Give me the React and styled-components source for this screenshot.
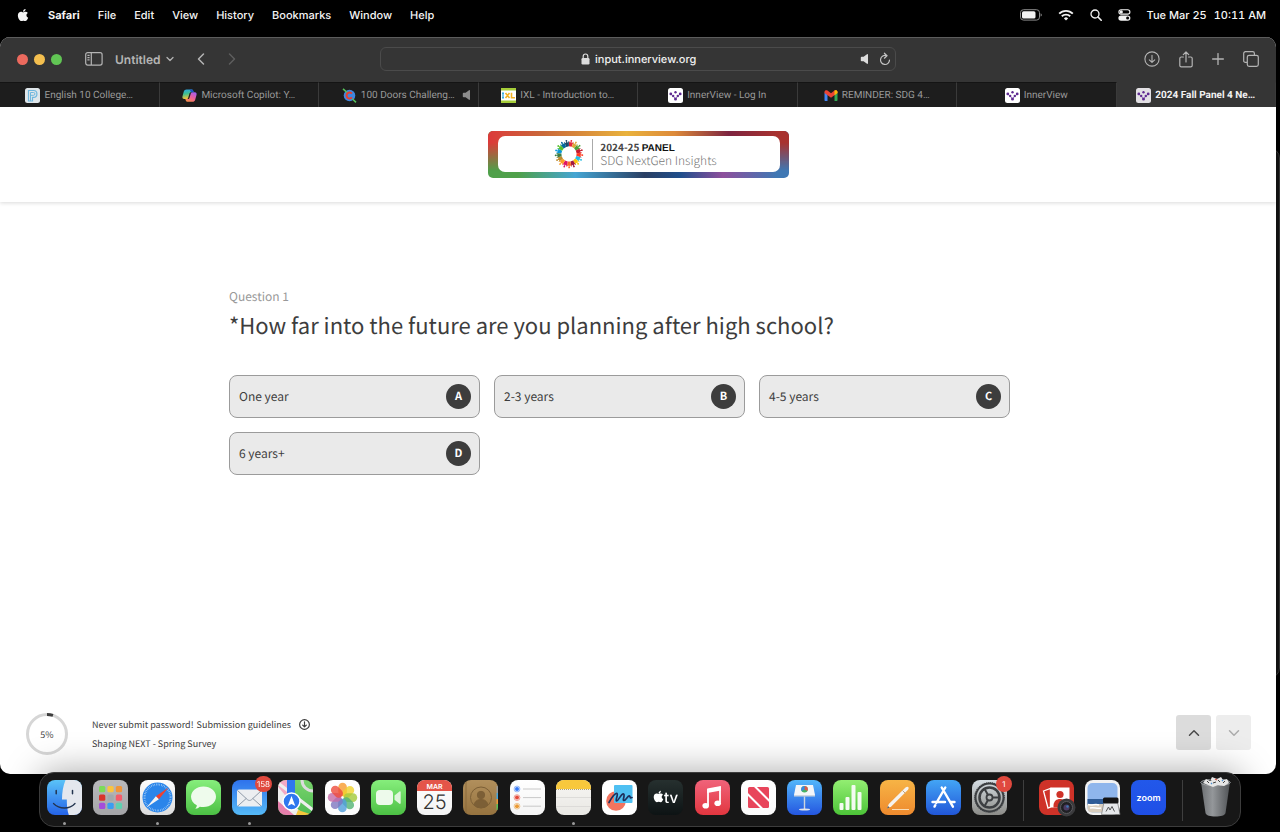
import { useState } from 'react';
import styled, { createGlobalStyle } from 'styled-components';
import { FaApple } from 'react-icons/fa';
import { ChevronDown, ChevronLeft, ChevronRight, ChevronUp } from 'lucide-react';

const sdgColors = [
  '#e5243b', '#dda63a', '#4c9f38', '#c5192d', '#ff3a21', '#26bde2',
  '#fcc30b', '#a21942', '#fd6925', '#dd1367', '#fd9d24', '#bf8b2e',
  '#3f7e44', '#0a97d9', '#56c02b', '#00689d', '#19486a'
];

const menus = ['File', 'Edit', 'View', 'History', 'Bookmarks', 'Window', 'Help'];

/* ---------- small icons ---------- */

const Battery = () => (
  <svg width="22" height="12" viewBox="0 0 22 12">
    <rect x="0.5" y="0.7" width="19" height="10.4" rx="3" fill="none" stroke="#8a8a8a" />
    <rect x="2" y="2.2" width="13.5" height="7.4" rx="1.6" fill="#f2f2f2" />
    <path d="M20.6 4.2v3.4c.8-.3 1.2-.9 1.2-1.7s-.4-1.400-1.200-1.700z" fill="#8a8a8a" />
  </svg>
);

const Wifi = () => (
  <svg width="16" height="12" viewBox="0 0 16 12" fill="none" stroke="#f2f2f2">
    <path d="M1.200 4.700a9.600 9.600 0 0 1 13.600 0" strokeWidth="1.900" />
    <path d="M3.800 7.300a6 6 0 0 1 8.400 0" strokeWidth="1.900" />
    <path d="M8 11.600 5.900 9.400a3 3 0 0 1 4.200 0z" fill="#f2f2f2" stroke="none" />
  </svg>
);

const Search = () => (
  <svg width="12" height="12" viewBox="0 0 12 12" fill="none" stroke="#f2f2f2" strokeLinecap="round">
    <circle cx="5" cy="5" r="4" strokeWidth="1.300" />
    <path d="m8 8 3.200 3.200" strokeWidth="1.600" />
  </svg>
);

const ControlCenter = () => (
  <svg width="13" height="12" viewBox="0 0 13 12">
    <rect x="0.900" y="0.700" width="11" height="4.400" rx="2.200" fill="none" stroke="#f2f2f2" strokeWidth="1.100" />
    <circle cx="3.300" cy="2.900" r="1.600" fill="#f2f2f2" />
    <rect x="0.400" y="6.400" width="12" height="5.400" rx="2.700" fill="#f2f2f2" />
    <circle cx="9.600" cy="9.100" r="1.500" fill="#000" />
  </svg>
);

const SidebarIcon = () => (
  <svg width="18" height="14" viewBox="0 0 18 14" fill="none" stroke="#b4b4b4" strokeWidth="1.200">
    <rect x="0.700" y="0.700" width="16.400" height="12.400" rx="2" />
    <path d="M6.300 1v12M2.400 3.400h2.200M2.400 5.600h2.200M2.400 7.800h2.200" />
  </svg>
);

const LockIcon = () => (
  <svg width="9" height="12" viewBox="0 0 9 12">
    <rect x="0.500" y="5" width="8" height="6.500" rx="1.200" fill="#dcdcdc" />
    <path d="M2.200 5.500V3.300a2.300 2.300 0 0 1 4.600 0v2.200" fill="none" stroke="#dcdcdc" strokeWidth="1.200" />
  </svg>
);

const Speaker = ({ color = '#dcdcdc' }) => (
  <svg width="10" height="12" viewBox="0 0 10 12">
    <path d="M1.600 3.800h2L7 1.200c.4-.3 1-.1 1 .5v8.600c0 .6-.6.800-1 .5L3.600 8.200h-2c-.5 0-.8-.3-.8-.8V4.600c0-.5.300-.8.800-.8z" fill={color} />
  </svg>
);

const Reload = () => (
  <svg width="12" height="14" viewBox="0 0 12 14" fill="none" stroke="#c4c4c4" strokeWidth="1.200" strokeLinecap="round">
    <path d="M7.400 3.700A4.500 4.500 0 1 0 10.500 8" />
    <path d="M5.400 1.200 8 3.700 5.400 6.200" />
  </svg>
);

const DownloadCircle = ({ size = 16, color = '#b4b4b4', width = 1.1 }) => (
  <svg width={size} height={size} viewBox="0 0 16 16" fill="none" stroke={color} strokeWidth={width} strokeLinecap="round" strokeLinejoin="round">
    <circle cx="8" cy="8" r="7.100" />
    <path d="M8 4.300v7M5.300 8.800 8 11.400l2.700-2.600" />
  </svg>
);

const ShareIcon = () => (
  <svg width="14" height="17" viewBox="0 0 14 17" fill="none" stroke="#b4b4b4" strokeWidth="1.200" strokeLinecap="round" strokeLinejoin="round">
    <path d="M4.400 6H2.300C1.300 6 .8 6.500.8 7.400v7c0 1 .5 1.400 1.500 1.400h9.400c1 0 1.500-.4 1.500-1.400v-7c0-.9-.5-1.400-1.500-1.400H9.600" />
    <path d="M7 11V1.200M4.300 3.700 7 1l2.700 2.700" />
  </svg>
);

const PlusIcon = () => (
  <svg width="12" height="12" viewBox="0 0 12 12" stroke="#b4b4b4" strokeWidth="1.300" strokeLinecap="round">
    <path d="M6 .6v10.800M.6 6h10.800" />
  </svg>
);

const TabsIcon = () => (
  <svg width="16" height="16" viewBox="0 0 16 16" fill="none" stroke="#b4b4b4" strokeWidth="1.200">
    <path d="M4.200 11.400H2.400A1.700 1.700 0 0 1 .7 9.700V2.400C.7 1.500 1.500.7 2.400.7h7.300c1 0 1.700.8 1.700 1.700v1.800" />
    <rect x="4.300" y="4.300" width="11" height="11" rx="1.800" />
  </svg>
);

const InnerViewMark = ({ bg = '#fff' }) => (
  <svg width="15" height="15" viewBox="0 0 15 15">
    <rect width="15" height="15" rx="2.500" fill={bg} />
    <path d="m2.800 6.200 2 1.500M12.200 6.200l-2 1.500M5.600 8.600l1.900 1.900 1.900-1.900" stroke="#9a7cc0" fill="none" />
    <g fill="#5f2a91">
      <circle cx="2.800" cy="5.900" r="1.400" />
      <circle cx="12.200" cy="5.900" r="1.400" />
      <circle cx="5.200" cy="8" r="1.200" />
      <circle cx="9.800" cy="8" r="1.200" />
      <circle cx="7.500" cy="4.300" r="1.200" />
      <circle cx="7.500" cy="11" r="1.500" />
    </g>
  </svg>
);

const PowerSchoolMark = () => (
  <svg width="15" height="15" viewBox="0 0 15 15" fill="none" stroke="#6fb7de">
    <rect width="15" height="15" rx="2.500" fill="#dfe6ea" stroke="none" />
    <path d="M3.500 13V2.500h5a3.300 3.300 0 0 1 0 6.800H7.500V13z" strokeWidth="1.200" />
    <path d="M5.500 13V4.500h3a1.400 1.400 0 0 1 0 2.800H5.500" />
  </svg>
);

const CopilotMark = () => (
  <svg width="15" height="15" viewBox="0 0 15 15">
    <defs>
      <linearGradient id="cpA" x1="0" y1="0" x2="0.200" y2="1">
        <stop offset="0" stopColor="#2aa6e8" />
        <stop offset="0.500" stopColor="#3fbf8f" />
        <stop offset="1" stopColor="#f3c13a" />
      </linearGradient>
      <linearGradient id="cpB" x1="0.800" y1="0" x2="0.200" y2="1">
        <stop offset="0" stopColor="#a45cf0" />
        <stop offset="0.500" stopColor="#ee5f98" />
        <stop offset="1" stopColor="#f88f45" />
      </linearGradient>
    </defs>
    <path d="M4.600 1.500h5c.9 0 1.400.6 1.700 1.500l.4 1.300H9.200c-1 0-1.500.5-1.800 1.500L6.300 9.500c-.3 1-.9 1.500-1.900 1.500H2.200C.7 11 .1 9.800.5 8.300l1.300-4.700C2.200 2.200 3.100 1.500 4.600 1.500z" fill="url(#cpA)" />
    <path d="M10.400 13.800h-5c-.9 0-1.400-.6-1.700-1.500L3.300 11h2.500c1 0 1.500-.5 1.800-1.500l1.100-3.700c.3-1 .9-1.500 1.900-1.500h2.200c1.500 0 2.100 1.200 1.700 2.700l-1.300 4.700c-.4 1.400-1.300 2.100-2.800 2.100z" fill="url(#cpB)" />
    <path d="M7.500 1.500h2.100c.9 0 1.400.6 1.700 1.500l.4 1.300H9.200z" fill="#1f4fc4" />
  </svg>
);

const CoolMathMark = () => (
  <svg width="15" height="15" viewBox="0 0 15 15" fill="none">
    <circle cx="7.500" cy="7.500" r="5.800" fill="#3f86e0" />
    <path d="m1 .8 4 3.500M10.500 11l3.500 3.300" stroke="#56c05a" strokeWidth="1.600" />
    <path d="M9.900 5.600a3 3 0 1 0 0 3.800" stroke="#e8402c" strokeWidth="2" />
  </svg>
);

const IxlMark = () => (
  <svg width="15" height="15" viewBox="0 0 15 15" fill="none">
    <rect width="15" height="15" fill="#fff" />
    <path d="M0 1.300h15M0 13.700h15" stroke="#a6ce39" strokeWidth="2.600" />
    <path d="M1 5.200h2M1 9.800h2M2 5.200v4.600" stroke="#29a3dd" strokeWidth="1.200" />
    <path d="m4.500 5 4 5M8.500 5l-4 5M10.500 4.800v5h3.500" stroke="#f4b223" strokeWidth="1.600" />
  </svg>
);

const GmailMark = () => (
  <svg width="14" height="15" viewBox="0 0 14 15">
    <path d="M.5 4.500h3V13h-2c-.6 0-1-.4-1-1z" fill="#4285f4" />
    <path d="M10.500 4.500h3V12c0 .6-.4 1-1 1h-2z" fill="#34a853" />
    <path d="M.5 4c0-1.700 1.800-2.300 3-1.400L7 5.300l3.500-2.700c1.200-.9 3-.3 3 1.400v1L7 9.800.5 5z" fill="#ea4335" />
    <path d="M10.500 2.600c1.200-.9 3-.3 3 1.400v1l-3 2.200z" fill="#fbbc04" />
  </svg>
);

const SdgWheel = () => (
  <svg width="30" height="30" viewBox="0 0 30 30">
    {sdgColors.map((color, i) => (
      <g key={color} transform={`rotate(${(i * 360) / 17 + 10} 15 15)`}>
        <path d="M12.600 2 14.100 3.800 15 1.600l.9 2.200L17.400 2l-1 5.500h-2.800z" fill={color} />
        <circle cx="15" cy="1.600" r="0.900" fill={color} />
      </g>
    ))}
  </svg>
);

/* ---------- dock icons, all on a 35 x 35 tile ---------- */

const Tile = ({ id, from, to, children }) => (
  <svg width="35" height="35" viewBox="0 0 35 35">
    <defs>
      <linearGradient id={`g-${id}`} x1="0" y1="0" x2="0" y2="1">
        <stop offset="0" stopColor={from} />
        <stop offset="1" stopColor={to} />
      </linearGradient>
      <clipPath id={`c-${id}`}>
        <rect width="35" height="35" rx="8" />
      </clipPath>
    </defs>
    <g clipPath={`url(#c-${id})`}>
      <rect width="35" height="35" fill={`url(#g-${id})`} />
      {children}
    </g>
  </svg>
);

const Finder = () => (
  <Tile id="finder" from="#5ac3f8" to="#2563e8">
    <path d="M18.500 0C16 6 15 13 15 19.500h4.800c0 6 .5 11 2 15.500H35V0z" fill="#e4e7ee" />
    <path d="M9.200 10.500v3.200M25.500 10.500v3.200" stroke="#23344f" strokeWidth="1.500" strokeLinecap="round" />
    <path d="M6.500 23.500c6 6 16 6 21.500 0" fill="none" stroke="#23344f" strokeWidth="1.300" strokeLinecap="round" />
  </Tile>
);

const Launchpad = () => (
  <Tile id="launchpad" from="#b9b9bb" to="#a5a5a8">
    {['#7bdc58', '#f9c440', '#f0953a', '#d9342c', '#a2a8ad', '#f45b6b', '#a44ddb', '#3b9df2', '#5fd0b0'].map((c, i) => (
      <rect key={c} x={6 + (i % 3) * 8.4} y={6 + Math.floor(i / 3) * 8.4} width="6.300" height="6.300" rx="1.500" fill={c} />
    ))}
  </Tile>
);

const Safari = () => (
  <Tile id="safari" from="#fdfdfd" to="#dcdcdc">
    <circle cx="17.500" cy="17.500" r="15" fill="#2a85ea" />
    <circle cx="17.500" cy="17.500" r="13" fill="none" stroke="#c8e2fb" strokeWidth="2" strokeDasharray="0.500 1.200" />
    <path d="m28.500 7.500-9.600 11.700-3-3z" fill="#f0402f" />
    <path d="m6.500 27.500 9.400-11.300 3 3z" fill="#f4f4f4" />
  </Tile>
);

const Messages = () => (
  <Tile id="messages" from="#86ee7c" to="#4cc044">
    <path d="M17.500 6.500c7 0 12.500 4.500 12.500 10.300s-5.500 10.300-12.500 10.300c-1.300 0-2.500-.1-3.700-.4-1.200 1.200-2.700 1.800-4.500 2 1-1 1.500-2.200 1.500-3.400C7.300 23.500 5 20.400 5 16.800 5 11 10.500 6.500 17.500 6.500z" fill="#eefbec" />
  </Tile>
);

const Mail = () => (
  <Tile id="mail" from="#2f72ec" to="#55baf7">
    <rect x="5" y="9.500" width="25" height="17" rx="2" fill="#eceef1" />
    <path d="m5.500 10.500 10 9.200c1.200 1 2.800 1 4 0l10-9.200M5.800 26l8.400-7.500M29.200 26l-8.400-7.500" fill="none" stroke="#8f9aa8" />
  </Tile>
);

const Maps = () => (
  <Tile id="maps" from="#79d46b" to="#4fbb55">
    <path d="M0 0h9v17L0 12z" fill="#f3a9c4" />
    <path d="M0 3 35 30M0 12l24 23M0 9v15l14 11h8z" stroke="#eee" strokeWidth="3" fill="#eee" />
    <path d="M0 21v14h16z" fill="#e77fac" />
    <path d="m20 30 15 5H18z" fill="#f4c63d" />
    <circle cx="35" cy="0" r="11" fill="none" stroke="#dcdcdc" strokeWidth="3" />
    <path d="M9 0h8v16H9z" fill="#2f78ee" />
    <circle cx="13.500" cy="21.500" r="8.500" fill="#2f78ee" stroke="#fff" strokeWidth="1.500" />
    <path d="m13.500 16 3.800 10-3.800-2-3.800 2z" fill="#fff" />
  </Tile>
);

const Photos = () => (
  <Tile id="photos" from="#fff" to="#fbfbfb">
    {['#f79b2e', '#f0d22c', '#a3c93a', '#52b374', '#4f9ddb', '#7d75bf', '#c46aa8', '#ee4b3c'].map((c, i) => (
      <rect key={c} x="13.300" y="2.800" width="8.600" height="13.500" rx="4.300" fill={c} opacity="0.800" transform={`rotate(${i * 45} 17.500 17.500)`} />
    ))}
  </Tile>
);

const FaceTime = () => (
  <Tile id="facetime" from="#86ee7c" to="#4cc044">
    <rect x="5" y="10" width="17" height="15" rx="4" fill="#edfaeb" />
    <path d="m23.500 15.500 5-4c.6-.4 1.200-.2 1.200.6v11c0 .8-.6 1-1.200.6l-5-4z" fill="#dff5dc" />
  </Tile>
);

const Calendar = () => (
  <Tile id="calendar" from="#fff" to="#f3f3f3">
    <rect width="35" height="11" fill="#e45549" />
    <text x="17.500" y="8.500" textAnchor="middle" fontFamily="Inter, sans-serif" fontSize="7" fontWeight="600" fill="#fff">MAR</text>
    <text x="17.500" y="29" textAnchor="middle" fontFamily="Inter, sans-serif" fontSize="20" fontWeight="300" fill="#333">25</text>
  </Tile>
);

const Contacts = () => (
  <Tile id="contacts" from="#b18f5c" to="#96733f">
    <path d="M33.500 6h3v7h-3z" fill="#9a9a9a" />
    <path d="M33.500 13h3v6h-3z" fill="#45a6e0" />
    <path d="M33.500 19h3v5h-3z" fill="#f09a3a" />
    <path d="M33.500 24h3v6h-3z" fill="#5cc15a" />
    <path d="M3 0v35" stroke="#8a6b3c" />
    <g stroke="#7c5f36" fill="none">
      <circle cx="18" cy="17.500" r="10.500" />
      <circle cx="18" cy="15" r="3.700" fill="#7c5f36" />
      <path d="M11 25c1-4 3.500-5.500 7-5.500s6 1.500 7 5.500a10.400 10.400 0 0 1-14 0z" fill="#7c5f36" />
    </g>
  </Tile>
);

const Reminders = () => (
  <Tile id="reminders" from="#fff" to="#f4f4f4">
    {['#3478f6', '#e5493a', '#eb9a34'].map((c, i) => (
      <g key={c}>
        <circle cx="7" cy={9 + i * 8.6} r="2.900" fill="none" stroke={c} strokeOpacity="0.500" />
        <circle cx="7" cy={9 + i * 8.6} r="2" fill={c} />
        <path d={`M13 ${9 + i * 8.6}h18`} stroke="#c8c8c8" />
      </g>
    ))}
  </Tile>
);

const Notes = () => (
  <Tile id="notes" from="#f7f6f3" to="#e9e8e4">
    <rect width="35" height="9" fill="#f8c83c" />
    <path d="M0 9.500h35" stroke="#b5a36a" strokeDasharray="1 1" />
    <path d="M0 17.500h35M0 26.500h35" stroke="#d8d7d4" strokeWidth="0.800" />
  </Tile>
);

const Freeform = () => (
  <Tile id="freeform" from="#fff" to="#fff">
    <circle cx="14" cy="21" r="9.800" fill="#f3745f" />
    <rect x="12" y="5" width="18.500" height="18" rx="1" fill="#4fc0f2" />
    <path d="M7 22.500C10 17 13.500 12.500 15 13.500s-2 7-.5 7.500 5-8 7-7-1.500 6.500.5 6.500 4-5.500 5.500-4.500-.5 2.500 2.500 1.500" fill="none" stroke="#1e2f5c" strokeWidth="1.700" strokeLinecap="round" />
  </Tile>
);

const AppleTv = () => (
  <Tile id="tv" from="#26302f" to="#0d1314">
    <FaApple x="4" y="10" size="13" color="#fff" />
    <text x="16" y="22.500" fontFamily="Inter, sans-serif" fontSize="15" fontWeight="500" fill="#fff">tv</text>
  </Tile>
);

const Music = () => (
  <Tile id="music" from="#f0637a" to="#e2363f">
    <path d="M13 10.200 25 7.500v14.800" fill="none" stroke="#fff" strokeWidth="1.800" />
    <path d="M13 9v16" stroke="#fff" strokeWidth="1.800" />
    <path d="m12.200 8.500 13.700-2.600v4.500L12.200 13z" fill="#fff" />
    <ellipse cx="10.700" cy="25.700" rx="3.300" ry="2.800" fill="#fff" />
    <ellipse cx="22.700" cy="23.200" rx="3.300" ry="2.800" fill="#fff" />
  </Tile>
);

const News = () => (
  <Tile id="news" from="#fff" to="#fafafa">
    <rect x="7" y="7" width="21" height="21" rx="1.500" fill="#e8455b" />
    <path d="m12.500 5 17.500 17.500M5 12.500 22.500 30" stroke="#fff" strokeWidth="2" />
  </Tile>
);

const Keynote = () => (
  <Tile id="keynote" from="#52b6fa" to="#2456e0">
    <path d="M9 5h17l2 10H7z" fill="#f4f6f9" />
    <path d="M7 15h21v1.500H7z" fill="#cdd5df" />
    <circle cx="17.500" cy="9.300" r="3.300" fill="#47b264" />
    <path d="M17.500 9.300V6a3.300 3.300 0 0 1 2.900 4.900z" fill="#e45549" />
    <path d="M17.500 9.300 14.600 11A3.300 3.300 0 0 1 17.500 6z" fill="#3b86e8" />
    <path d="M16.800 16.500h1.400V29h-1.400z" fill="#cdd5df" />
    <ellipse cx="17.500" cy="29.500" rx="5.500" ry="1.100" fill="#dfe5ec" />
  </Tile>
);

const Numbers = () => (
  <Tile id="numbers" from="#93ee72" to="#4cc438">
    <g fill="#f3fbf0">
      <rect x="6.500" y="23" width="4" height="7" rx="1" />
      <rect x="12.500" y="17" width="4" height="13" rx="1" />
      <rect x="18.500" y="5" width="4" height="25" rx="1" />
      <rect x="24.500" y="12" width="4" height="18" rx="1" />
    </g>
  </Tile>
);

const Pages = () => (
  <Tile id="pages" from="#f7b445" to="#ee8a2e">
    <path d="m7 28.500 1.800-4.500L25.500 7.500c2.500-1.800 4.200 0 2.500 2.300L11.500 26.200z" fill="#f6f3ee" />
    <path d="m7 28.500 1-2.600 1.500 1.500z" fill="#555" />
    <path d="m22.500 10.500 3 3" stroke="#b9a58a" />
    <path d="M12 29.500h17" stroke="#f9dcb4" />
  </Tile>
);

const AppStore = () => (
  <Tile id="appstore" from="#43a5f5" to="#2156d8">
    <g stroke="#fff" strokeWidth="2.400" strokeLinecap="round">
      <path d="m19.300 7.500-9 15.500M15.700 7.500l11.200 19.200M6.500 22h12.500M24.500 22h4M9.300 25.200l-.8 1.400" />
    </g>
  </Tile>
);

const Settings = () => (
  <Tile id="settings" from="#d5dde3" to="#8c8c88">
    <g fill="none" stroke="#3c3f42">
      <circle cx="17.500" cy="17.500" r="14" strokeWidth="2" />
      <circle cx="17.500" cy="17.500" r="14.800" strokeWidth="1.200" strokeDasharray="1 1" />
      <circle cx="17.500" cy="17.500" r="10" strokeWidth="2.600" />
      <circle cx="17.500" cy="17.500" r="3" strokeWidth="1.800" />
      <path d="M20.500 17.500h7M16 14.900l-3.500-6.100M16 20.100l-3.500 6.100" strokeWidth="2" />
    </g>
  </Tile>
);

const PhotoBooth = () => (
  <svg width="37" height="37" viewBox="0 0 37 37">
    <rect width="35" height="35" rx="8" fill="#cf3228" />
    <path d="m4.500 11 7-2.500V27L9 28z" fill="#cf3228" stroke="#fff" strokeWidth="1.300" />
    <path d="M11.500 7.500h19v20h-19z" fill="#fff" />
    <circle cx="21" cy="14.500" r="3.600" fill="#cf3228" />
    <path d="M14.500 25c.5-4 3-6 6.500-6s6 2 6.500 6v2.500h-13z" fill="#cf3228" />
    <circle cx="27.500" cy="27.500" r="9" fill="#3a3a3c" />
    <circle cx="27.500" cy="27.500" r="6" fill="#202024" stroke="#5b5b5f" />
    <circle cx="27.500" cy="27.500" r="3" fill="#4b3b63" />
    <circle cx="28.500" cy="26.500" r="1.200" fill="#3c79b5" />
  </svg>
);

const Preview = () => (
  <svg width="37" height="37" viewBox="0 0 37 37">
    <rect width="35" height="35" rx="8" fill="#f2f2f2" />
    <rect x="2.500" y="3" width="30" height="29.500" rx="5" fill="#8fb6ec" />
    <path d="M2.500 19h30v6h-30z" fill="#2f5c96" />
    <path d="M2.500 24h30v4c0 3-2 4.500-5 4.500h-20c-3 0-5-1.500-5-4.500z" fill="#d8cdbd" />
    <path d="M3 24.500c4 1.500 7-1 11 .5M5 28c4-1 7 1 11 0" stroke="#fff" strokeWidth="1.400" fill="none" />
    <path d="M19 22h13.500l2.500 12.500H16.500z" fill="#e6e8ea" stroke="#777" strokeWidth="0.700" />
    <rect x="18" y="17.500" width="15.500" height="6" rx="1.500" fill="#141414" />
    <path d="M21 31.500 23.500 27l1.500 3 2-3.500 2.500 5" fill="none" stroke="#555" />
  </svg>
);

const Zoom = () => (
  <Tile id="zoom" from="#2258ea" to="#1f4fe6">
    <text x="17.500" y="20.500" textAnchor="middle" fontFamily="Inter, sans-serif" fontSize="9" fontWeight="600" fill="#fff">zoom</text>
  </Tile>
);

const Trash = () => (
  <svg width="35" height="38" viewBox="0 4 35 38" overflow="visible">
    <defs>
      <linearGradient id="g-trash" x1="0" x2="1">
        <stop offset="0" stopColor="#6c6f72" />
        <stop offset="0.400" stopColor="#94979a" />
        <stop offset="1" stopColor="#505356" />
      </linearGradient>
    </defs>
    <path d="m3 6 4.500 31c.4 2.500 5 3.500 10 3.500s9.600-1 10-3.500L32 6z" fill="url(#g-trash)" />
    <ellipse cx="17.500" cy="6.500" rx="14.800" ry="3.200" fill="#34373a" stroke="#b4b7ba" strokeWidth="0.800" />
    <path d="m5 7 3-4 4 2 2-4 5 2 4-2 2 3 4-1 2 4-5 3-6-1-5 2-5-2z" fill="#e6e6e6" />
    <path d="m9 5 2 2M20 4l2 2M15 7l3-1M25 7l2-2M12 3l1 2" stroke="#444" />
    <path d="m17 3 2 1" stroke="#d7574a" strokeWidth="1.300" />
    <path d="m24 4 1 1M13 7l1 1" stroke="#4b8fd0" strokeWidth="1.300" />
  </svg>
);

const browserTabs = [
  { label: 'English 10 College…', icon: <PowerSchoolMark /> },
  { label: 'Microsoft Copilot: Y…', icon: <CopilotMark /> },
  { label: '100 Doors Challeng…', icon: <CoolMathMark />, playing: true },
  { label: 'IXL - Introduction to…', icon: <IxlMark /> },
  { label: 'InnerView - Log In', icon: <InnerViewMark /> },
  { label: 'REMINDER: SDG 4…', icon: <GmailMark /> },
  { label: 'InnerView', icon: <InnerViewMark /> },
  { label: '2024 Fall Panel 4 Ne…', icon: <InnerViewMark bg="#e2e0e4" /> }
];

const answers = [
  { key: 'A', label: 'One year' },
  { key: 'B', label: '2-3 years' },
  { key: 'C', label: '4-5 years' },
  { key: 'D', label: '6 years+' }
];

const apps = [
  { name: 'Finder', Icon: Finder, running: true },
  { name: 'Launchpad', Icon: Launchpad },
  { name: 'Safari', Icon: Safari, running: true },
  { name: 'Messages', Icon: Messages },
  { name: 'Mail', Icon: Mail, running: true, badge: '158' },
  { name: 'Maps', Icon: Maps },
  { name: 'Photos', Icon: Photos },
  { name: 'FaceTime', Icon: FaceTime },
  { name: 'Calendar', Icon: Calendar },
  { name: 'Contacts', Icon: Contacts },
  { name: 'Reminders', Icon: Reminders },
  { name: 'Notes', Icon: Notes, running: true },
  { name: 'Freeform', Icon: Freeform },
  { name: 'TV', Icon: AppleTv },
  { name: 'Music', Icon: Music },
  { name: 'News', Icon: News },
  { name: 'Keynote', Icon: Keynote },
  { name: 'Numbers', Icon: Numbers },
  { name: 'Pages', Icon: Pages },
  { name: 'App Store', Icon: AppStore },
  { name: 'System Settings', Icon: Settings, badge: '1' }
];

const recentApps = [
  { name: 'Photo Booth', Icon: PhotoBooth },
  { name: 'Preview', Icon: Preview },
  { name: 'Zoom', Icon: Zoom }
];

const DockApp = ({ name, Icon, running, badge }) => (
  <DockButton aria-label={name}>
    <Icon />
    {badge && <Badge>{badge}</Badge>}
    {running && <RunningDot />}
  </DockButton>
);

const App = () => {
  const [activeTab, setActiveTab] = useState(7);
  const [url, setUrl] = useState('input.innerview.org');
  const [answer, setAnswer] = useState(null);

  return (
    <Desktop>
      <GlobalStyle />
      <MenuBar>
        <MenuGroup>
          <MenuItem aria-label="Apple">
            <FaApple size={14} />
          </MenuItem>
          <MenuItem $bold>Safari</MenuItem>
          {menus.map(menu => (
            <MenuItem key={menu}>{menu}</MenuItem>
          ))}
        </MenuGroup>
        <StatusGroup>
          <Battery />
          <Wifi />
          <Search />
          <ControlCenter />
          <Clock>
            <span>Tue Mar 25</span>
            <span>10:11 AM</span>
          </Clock>
        </StatusGroup>
      </MenuBar>

      <BackWindow />
      <Window>
        <Toolbar>
          <ToolbarLeft>
            <Lights>
              <Light $color="#ec6a5e" />
              <Light $color="#f4bf4f" />
              <Light $color="#61c554" />
            </Lights>
            <ToolButton aria-label="Sidebar">
              <SidebarIcon />
            </ToolButton>
            <GroupButton>
              Untitled
              <ChevronDown size={12} strokeWidth={2.5} />
            </GroupButton>
            <NavButtons>
              <ToolButton aria-label="Back">
                <ChevronLeft size={20} strokeWidth={1.8} />
              </ToolButton>
              <ToolButton aria-label="Forward" $dim>
                <ChevronRight size={20} strokeWidth={1.8} />
              </ToolButton>
            </NavButtons>
          </ToolbarLeft>
          <AddressBar>
            <AddressCenter>
              <LockIcon />
              <AddressInput
                aria-label="Address"
                value={url}
                onChange={event => setUrl(event.target.value)}
              />
            </AddressCenter>
            <ToolButton aria-label="Mute">
              <Speaker />
            </ToolButton>
            <ToolButton aria-label="Reload">
              <Reload />
            </ToolButton>
          </AddressBar>
          <ToolbarRight>
            <ToolButton aria-label="Downloads">
              <DownloadCircle />
            </ToolButton>
            <ToolButton aria-label="Share">
              <ShareIcon />
            </ToolButton>
            <ToolButton aria-label="New tab">
              <PlusIcon />
            </ToolButton>
            <ToolButton aria-label="Tab overview">
              <TabsIcon />
            </ToolButton>
          </ToolbarRight>
        </Toolbar>

        <TabBar>
          {browserTabs.map((tab, index) => (
            <Tab
              key={index}
              $active={activeTab === index}
              onClick={() => setActiveTab(index)}
            >
              {tab.icon}
              <span>{tab.label}</span>
              {tab.playing && (
                <TabAudio>
                  <Speaker color="#8c8c8c" />
                </TabAudio>
              )}
            </Tab>
          ))}
        </TabBar>

        <Page>
          <PageHeader>
            <Banner>
              <BannerInner>
                <SdgWheel />
                <BannerText>
                  <BannerTitle>
                    2024-25 <b>PANEL</b>
                  </BannerTitle>
                  <BannerSub>SDG NextGen Insights</BannerSub>
                </BannerText>
              </BannerInner>
            </Banner>
          </PageHeader>

          <Survey>
            <QuestionNumber>Question 1</QuestionNumber>
            <Question>
              *How far into the future are you planning after high school?
            </Question>
            <Options>
              {answers.map(({ key, label }) => (
                <Option
                  key={key}
                  aria-pressed={answer === key}
                  onClick={() => setAnswer(key)}
                >
                  {label}
                  <OptionKey>{key}</OptionKey>
                </Option>
              ))}
            </Options>
          </Survey>

          <PageFooter>
            <Progress>
              <svg width="42" height="42" viewBox="0 0 42 42" fill="none" strokeWidth="3">
                <circle cx="21" cy="21" r="19.500" stroke="#d6d6d6" />
                <circle cx="21" cy="21" r="19.500" stroke="#3d3d3d" pathLength="100" strokeDasharray="5 95" transform="rotate(-90 21 21)" />
              </svg>
              <ProgressLabel>5%</ProgressLabel>
            </Progress>
            <FooterText>
              <FooterLine>
                Never submit password!{' '}
                <FooterLink href="#guidelines">
                  Submission guidelines
                  <DownloadCircle size={11} color="#3d3d3d" width={1.7} />
                </FooterLink>
              </FooterLine>
              <FooterLine>Shaping NEXT - Spring Survey</FooterLine>
            </FooterText>
            <Pager>
              <PagerButton aria-label="Previous question">
                <ChevronUp size={18} strokeWidth={2} />
              </PagerButton>
              <PagerButton aria-label="Next question" disabled>
                <ChevronDown size={18} strokeWidth={2} />
              </PagerButton>
            </Pager>
          </PageFooter>
        </Page>
      </Window>

      <Dock>
        <DockGroup $grow>
          {apps.map(app => (
            <DockApp key={app.name} {...app} />
          ))}
        </DockGroup>
        <DockDivider />
        <DockGroup>
          {recentApps.map(app => (
            <DockApp key={app.name} {...app} />
          ))}
        </DockGroup>
        <DockDivider />
        <DockGroup>
          <DockApp name="Trash" Icon={Trash} />
        </DockGroup>
      </Dock>
    </Desktop>
  );
};

export default App;

const GlobalStyle = createGlobalStyle`
  * {
    box-sizing: border-box;
  }

  body {
    margin: 0;
    background: #000;
    font-family: Inter, 'Liberation Sans', sans-serif;
    text-rendering: geometricPrecision;
  }

  button, input {
    font: inherit;
    color: inherit;
    text-rendering: inherit;
    margin: 0;
    padding: 0;
    border: 0;
    background: none;
  }

  svg {
    display: block;
    flex-shrink: 0;
  }
`;

const Desktop = styled.div`
  position: relative;
  display: flex;
  flex-direction: column;
  min-height: 100vh;
  padding: 0 4px 58px 0;
  background: #000;
`;

const MenuBar = styled.header`
  display: flex;
  align-items: center;
  justify-content: space-between;
  height: 30px;
  margin-bottom: 7px;
  padding: 0 10px 0 16px;
  color: #f5f5f5;
  font-size: 11px;
  font-weight: 500;
`;

const MenuGroup = styled.nav`
  display: flex;
  align-items: center;
  gap: 18px;
`;

const MenuItem = styled.button`
  font-weight: ${props => (props.$bold ? 700 : 500)};
`;

const StatusGroup = styled.div`
  display: flex;
  align-items: center;
  gap: 16px;
`;

const Clock = styled.div`
  display: flex;
  gap: 7px;
  font-variant-numeric: tabular-nums;
`;

const BackWindow = styled.div`
  position: absolute;
  top: 148px;
  right: 0;
  bottom: 154px;
  width: 40px;
  border: 1px solid #333;
  border-radius: 10px;
  background: #111;
`;

const Window = styled.div`
  position: relative;
  display: flex;
  flex: 1;
  flex-direction: column;
  overflow: hidden;
  border-radius: 10px;
  background: #fff;
`;

const Toolbar = styled.div`
  display: grid;
  grid-template-columns: 1fr minmax(0, 516px) 1fr;
  align-items: center;
  height: 45px;
  padding-bottom: 2px;
  border-top: 1px solid #5c5c5c;
  background: #353535;
  color: #b4b4b4;
`;

const ToolbarLeft = styled.div`
  display: flex;
  align-items: center;
  padding-left: 17px;
`;

const Lights = styled.div`
  display: flex;
  gap: 6px;
  margin-right: 23px;
`;

const Light = styled.span`
  width: 11px;
  height: 11px;
  border-radius: 50%;
  background: ${props => props.$color};
`;

const ToolButton = styled.button`
  display: flex;
  align-items: center;
  justify-content: center;
  color: ${props => (props.$dim ? '#5e5e5e' : '#b4b4b4')};
`;

const GroupButton = styled.button`
  display: flex;
  align-items: center;
  gap: 3px;
  margin-left: 12px;
  font-size: 12px;
  font-weight: 600;
`;

const NavButtons = styled.div`
  display: flex;
  gap: 11px;
  margin-left: 15px;
`;

const ToolbarRight = styled.div`
  display: flex;
  align-items: center;
  justify-content: flex-end;
  gap: 19px;
  padding-right: 17px;
`;

const AddressBar = styled.div`
  display: flex;
  align-items: center;
  gap: 9px;
  height: 24px;
  padding: 0 4px 0 48px;
  border: 1px solid #4b4b4b;
  border-radius: 6px;
`;

const AddressCenter = styled.div`
  display: flex;
  flex: 1;
  align-items: center;
  justify-content: center;
  gap: 5px;
`;

const AddressInput = styled.input`
  width: 104px;
  color: #f0f0f0;
  font-size: 11px;
  font-weight: 500;
  outline: none;
`;

const TabBar = styled.div`
  display: grid;
  grid-template-columns: repeat(8, 1fr);
  height: 25px;
  background: #1d1d1d;
`;

const Tab = styled.button`
  position: relative;
  display: flex;
  align-items: center;
  justify-content: center;
  gap: 4px;
  min-width: 0;
  border-right: 1px solid #3a3a3a;
  border-top: 1px solid ${props => (props.$active ? '#353535' : '#141414')};
  background: ${props => (props.$active ? '#353535' : '#1d1d1d')};
  color: ${props => (props.$active ? '#f2f2f2' : '#9a9a9a')};
  font-family: Roboto, Inter, sans-serif;
  font-size: 10px;
  font-weight: ${props => (props.$active ? 700 : 400)};
  white-space: nowrap;
`;

const TabAudio = styled.span`
  position: absolute;
  right: 6px;
`;

const Page = styled.div`
  display: flex;
  flex: 1;
  flex-direction: column;
  color: #3d3d3d;
  font-family: 'Noto Sans CJK SC', 'Noto Sans', sans-serif;
`;

const PageHeader = styled.div`
  display: flex;
  justify-content: center;
  padding: 24px 0;
  box-shadow: 0 1px 4px rgba(0, 0, 0, 0.15);
`;

const Banner = styled.div`
  position: relative;
  width: 301px;
  padding: 5px 9px 6px 10px;
  overflow: hidden;
  border-radius: 5px;
  background: linear-gradient(
    to right,
    #4fa04a 0%,
    #4fa04a 10%,
    #45a5d3 29%,
    #2a3f63 52%,
    #1f4e8c 64%,
    #8e4f9c 78%,
    #3f78b4 96%
  );

  &::before {
    content: '';
    position: absolute;
    inset: 0;
    background: linear-gradient(
      to right,
      #dc3a3a 0%,
      #c9683a 18%,
      #e9b23c 46%,
      #dd8a3a 62%,
      #7d2440 80%,
      #a8322f 96%
    );
    mask-image: linear-gradient(to bottom, #000 25%, transparent 85%);
  }
`;

const BannerInner = styled.div`
  position: relative;
  display: flex;
  align-items: center;
  justify-content: center;
  gap: 8px;
  height: 36px;
  padding-right: 6px;
  border-radius: 7px;
  background: #fff;
`;

const BannerText = styled.div`
  padding: 1px 0 3px 7px;
  border-left: 1px solid #aaa;
`;

const BannerTitle = styled.div`
  color: #444;
  font-size: 10px;
  font-weight: 700;
  line-height: 13px;

  b {
    color: #111;
    font-family: 'Liberation Sans', sans-serif;
  }
`;

const BannerSub = styled.div`
  color: #777;
  font-size: 12px;
  font-weight: 300;
  line-height: 12px;
`;

const Survey = styled.main`
  padding: 86px 266px 0 229px;
`;

const QuestionNumber = styled.div`
  color: #999;
  font-size: 12px;
  line-height: 18px;
`;

const Question = styled.h1`
  margin: 0 0 31px;
  font-size: 22px;
  font-weight: 400;
  line-height: 38px;
`;

const Options = styled.div`
  display: grid;
  grid-template-columns: repeat(3, 1fr);
  gap: 14px;
`;

const Option = styled.button`
  display: flex;
  align-items: center;
  justify-content: space-between;
  height: 43px;
  padding: 0 8px 0 9px;
  border: 1px solid #9b9b9b;
  border-radius: 8px;
  background: #eaeaea;
  font-size: 12px;
`;

const OptionKey = styled.span`
  width: 25px;
  height: 25px;
  border-radius: 50%;
  background: #3d3d3d;
  color: #fff;
  font-size: 11px;
  font-weight: 700;
  line-height: 25px;
  text-align: center;
`;

const PageFooter = styled.footer`
  display: flex;
  align-items: center;
  margin-top: auto;
  padding: 0 25px 19px 26px;
`;

const Progress = styled.div`
  display: grid;
  place-items: center;

  > * {
    grid-area: 1 / 1;
  }
`;

const ProgressLabel = styled.span`
  font-size: 9px;
`;

const FooterText = styled.div`
  margin-left: 24px;
`;

const FooterLine = styled.div`
  display: flex;
  gap: 3px;
  font-size: 9px;
  line-height: 19px;
`;

const FooterLink = styled.a`
  display: flex;
  align-items: center;
  gap: 8px;
  color: inherit;
  text-decoration: none;
`;

const Pager = styled.div`
  display: flex;
  gap: 5px;
  margin-left: auto;
  padding-bottom: 3px;
`;

const PagerButton = styled.button`
  display: flex;
  align-items: center;
  justify-content: center;
  width: 35px;
  height: 35px;
  border-radius: 3px;
  background: #dcdcdc;
  color: #4a4a4a;

  &:disabled {
    background: #ededed;
    color: #ababab;
  }
`;

const Dock = styled.nav`
  position: fixed;
  right: 39px;
  bottom: 5px;
  left: 39px;
  display: flex;
  height: 55px;
  padding: 7px;
  border: 1px solid #3c3c3c;
  border-radius: 15px;
  background: #171717;
  box-shadow: 0 0 36px rgba(0, 0, 0, 0.35);
`;

const DockGroup = styled.div`
  display: flex;
  flex: ${props => (props.$grow ? '1' : 'none')};
  justify-content: space-between;
  gap: 11px;
`;

const DockButton = styled.button`
  position: relative;
  display: flex;
  align-items: flex-start;
  width: 35px;
  height: 35px;
`;

const Badge = styled.span`
  position: absolute;
  top: -4px;
  right: -5px;
  min-width: 16px;
  height: 16px;
  padding: 0 2px;
  border-radius: 8px;
  background: #e0493e;
  color: #fff;
  font-size: 8px;
  line-height: 16px;
  text-align: center;
`;

const RunningDot = styled.span`
  position: absolute;
  bottom: -10px;
  left: 16px;
  width: 3px;
  height: 3px;
  border-radius: 50%;
  background: #9a9a9a;
`;

const DockDivider = styled.span`
  width: 1px;
  height: 41px;
  margin: 0 15px 0 16px;
  background: #3f3f3f;
`;
